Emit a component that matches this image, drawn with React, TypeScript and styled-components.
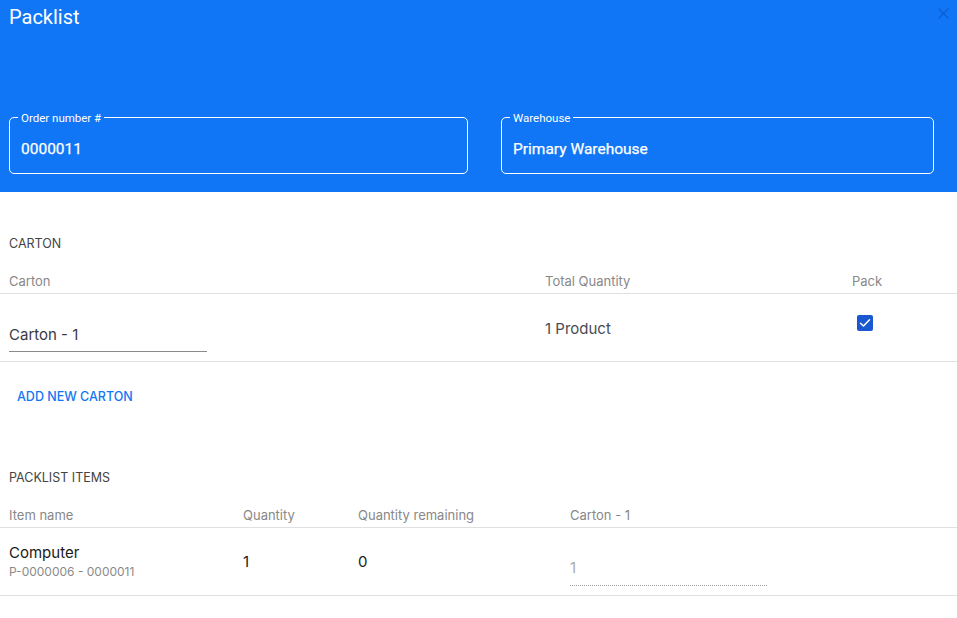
import React from "react";
import styled, { createGlobalStyle } from "styled-components";

const Global = createGlobalStyle`
  html, body { margin: 0; padding: 0; background: #fff; }
  body { font-family: Inter, "Noto Sans", sans-serif; }
  * { box-sizing: border-box; }
`;

const Page = styled.div`
  width: 957px;
  min-height: 618px;
  background: #fff;
`;

const Header = styled.header`
  background: #1176f5;
  height: 192px;
  padding: 0 8px 18px 9px;
  display: flex;
  flex-direction: column;
  font-family: Roboto, "Liberation Sans", sans-serif;
`;

const TitleRow = styled.div`
  display: flex;
  justify-content: space-between;
  align-items: flex-start;
  padding-top: 5px;
`;

const Title = styled.h1`
  margin: 0;
  font-size: 20px;
  line-height: 24px;
  font-weight: 400;
  color: #fff;
`;

const Close = styled.button`
  margin-top: 3px;
  width: 11px;
  height: 11px;
  padding: 0;
  border: 0;
  background: none;
  display: flex;
  cursor: pointer;
`;

const Fields = styled.div`
  margin-top: auto;
  display: grid;
  grid-template-columns: 459px 433px;
  column-gap: 33px;
`;

const Field = styled.fieldset`
  margin: 0;
  padding: 0 11px;
  border: 1px solid #fff;
  border-radius: 5px;
  min-width: 0;
`;

const Legend = styled.legend`
  padding: 2px 3px 0;
  margin-left: -3px;
  font-size: 11.5px;
  line-height: 12px;
  color: #fff;
`;

const FieldValue = styled.div`
  padding: 16px 0 15px;
  font-size: 15.5px;
  line-height: 18px;
  font-weight: 400;
  color: #fff;
  -webkit-text-stroke: 0.25px #fff;
`;

const SectionTitle = styled.h2<{ $top: number }>`
  margin: ${(p) => p.$top}px 0 0;
  padding-left: 9px;
  font-size: 12.5px;
  line-height: 16px;
  font-weight: 400;
  color: #444;
  text-transform: uppercase;
`;

const Table = styled.div<{ $cols: string }>`
  margin-top: 18px;
  display: grid;
  grid-template-columns: ${(p) => p.$cols};
`;

const HeadCell = styled.div`
  height: 24px;
  padding: 3px 0 0 9px;
  font-size: 13px;
  line-height: 16px;
  color: #888;
  border-bottom: 1px solid #e0e0e0;
`;

const Cell = styled.div<{ $shift?: number }>`
  height: 68px;
  padding: ${(p) => p.$shift ?? 0}px 0 0 9px;
  display: flex;
  flex-direction: column;
  justify-content: center;
  border-bottom: 1px solid #e0e0e0;
  font-size: 15px;
  line-height: 18px;
  color: #222;
`;

const TextInput = styled.div<{ $w: number; $dotted?: boolean; $muted?: boolean }>`
  width: ${(p) => p.$w}px;
  margin-top: 17px;
  padding: ${(p) => (p.$dotted ? "5px 0 8px" : "6px 0 7px")};
  font-size: 15px;
  line-height: 18px;
  color: ${(p) => (p.$muted ? "#aaa" : "#3a3a44")};
  border-bottom: 1px ${(p) => (p.$dotted ? "dotted #9a9a9a" : "solid #8a8a8a")};
`;

const Muted = styled.span`
  color: #4a4a55;
`;

const PackCell = styled(Cell)`
  padding-left: 14px;
  justify-content: flex-start;
  padding-top: 21px;
`;

const Checkbox = styled.span`
  width: 16px;
  height: 16px;
  border-radius: 2px;
  background: #1a58cf;
  display: flex;
  align-items: center;
  justify-content: center;
`;

const Name = styled.div`
  font-size: 15px;
  line-height: 18px;
  color: #1a1a1a;
`;

const Sub = styled.div`
  margin-top: 2px;
  font-size: 12px;
  line-height: 15px;
  color: #8a8a8a;
`;

const AddButton = styled.button`
  margin: 16px 0 0 9px;
  height: 36px;
  padding: 0 8px;
  border: 0;
  background: none;
  font-family: Inter, "Noto Sans", sans-serif;
  font-size: 12.5px;
  font-weight: 500;
  color: #1176f5;
  text-transform: uppercase;
  cursor: pointer;
`;

const Check = () => (
  <svg width="12" height="10" viewBox="0 0 12 10">
    <path d="M1.5 5.2 L4.5 8 L10.5 1.8" fill="none" stroke="#fff" strokeWidth="1.5" strokeLinecap="round" strokeLinejoin="round" />
  </svg>
);

export default function App() {
  return (
    <Page>
      <Global />
      <Header>
        <TitleRow>
          <Title>Packlist</Title>
          <Close aria-label="close">
            <svg width="11" height="11" viewBox="0 0 11 11">
              <path d="M0.5 0.5 L10.5 10.5 M10.5 0.5 L0.5 10.5" stroke="#0b5fd2" strokeWidth="1.4" />
            </svg>
          </Close>
        </TitleRow>
        <Fields>
          <Field>
            <Legend>Order number #</Legend>
            <FieldValue>0000011</FieldValue>
          </Field>
          <Field>
            <Legend>Warehouse</Legend>
            <FieldValue>Primary Warehouse</FieldValue>
          </Field>
        </Fields>
      </Header>

      <SectionTitle $top={44}>Carton</SectionTitle>
      <Table $cols="536px 307px 1fr">
        <HeadCell>Carton</HeadCell>
        <HeadCell>Total Quantity</HeadCell>
        <HeadCell>Pack</HeadCell>
        <Cell>
          <TextInput $w={198}>Carton - 1</TextInput>
        </Cell>
        <Cell $shift={2}>
          <Muted>1 Product</Muted>
        </Cell>
        <PackCell>
          <Checkbox>
            <Check />
          </Checkbox>
        </PackCell>
      </Table>
      <AddButton>Add new carton</AddButton>

      <SectionTitle $top={56}>Packlist items</SectionTitle>
      <Table $cols="234px 115px 212px 1fr">
        <HeadCell>Item name</HeadCell>
        <HeadCell>Quantity</HeadCell>
        <HeadCell>Quantity remaining</HeadCell>
        <HeadCell>Carton - 1</HeadCell>
        <Cell>
          <Name>Computer</Name>
          <Sub>P-0000006 - 0000011</Sub>
        </Cell>
        <Cell>1</Cell>
        <Cell>0</Cell>
        <Cell>
          <TextInput $w={197} $dotted $muted>1</TextInput>
        </Cell>
      </Table>
    </Page>
  );
}
